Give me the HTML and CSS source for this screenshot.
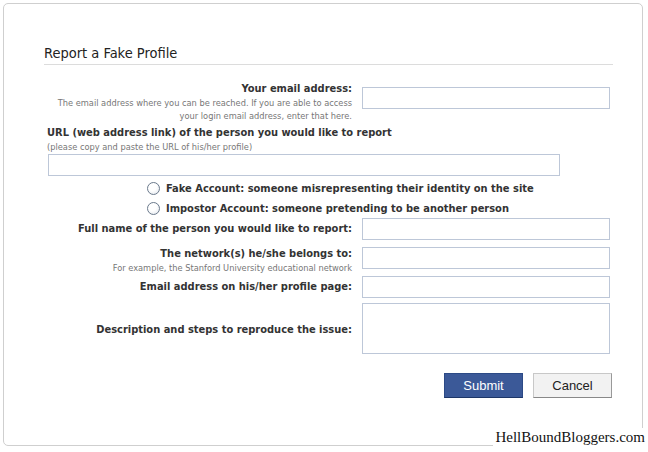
FILE: index.html
```html
<!DOCTYPE html>
<html>
<head>
<meta charset="utf-8">
<link rel="stylesheet" href="styles.css">
</head>
<body>
<div class="panel">
  <h2 class="title">Report a Fake Profile</h2>
  <div class="row row-email">
    <div class="label">
      <div class="lab">Your email address:</div>
      <div class="note">The email address where you can be reached. If you are able to access<br>your login email address, enter that here.</div>
    </div>
    <div class="field"><span class="input"></span></div>
  </div>
  <div class="url">
    <div class="lab">URL (web address link) of the person you would like to report</div>
    <div class="note">(please copy and paste the URL of his/her profile)</div>
    <span class="input wide"></span>
  </div>
  <div class="radios">
    <div class="radio"><span class="dot"></span>Fake Account: someone misrepresenting their identity on the site</div>
    <div class="radio"><span class="dot"></span>Impostor Account: someone pretending to be another person</div>
  </div>
  <div class="row row-name">
    <div class="label"><div class="lab">Full name of the person you would like to report:</div></div>
    <div class="field"><span class="input"></span></div>
  </div>
  <div class="row row-net">
    <div class="label">
      <div class="lab">The network(s) he/she belongs to:</div>
      <div class="note">For example, the Stanford University educational network</div>
    </div>
    <div class="field"><span class="input"></span></div>
  </div>
  <div class="row row-mail">
    <div class="label"><div class="lab">Email address on his/her profile page:</div></div>
    <div class="field"><span class="input"></span></div>
  </div>
  <div class="row row-desc">
    <div class="label"><div class="lab">Description and steps to reproduce the issue:</div></div>
    <div class="field"><span class="input area"></span></div>
  </div>
  <div class="buttons">
    <span class="btn submit">Submit</span>
    <span class="btn cancel">Cancel</span>
  </div>
</div>
<div class="watermark">HellBoundBloggers.com</div>
</body>
</html>
```
FILE: styles.css
```css
html, body {
  margin: 0;
  padding: 0;
  background: #fff;
}
body {
  width: 648px;
  height: 452px;
  position: relative;
  overflow: hidden;
  font-family: "DejaVu Sans", Tahoma, sans-serif;
  font-stretch: condensed;
  color: #333;
}
.panel {
  box-sizing: border-box;
  margin: 3px 0 0 3px;
  width: 640px;
  height: 443px;
  border: 1px solid #cfcfcf;
  border-radius: 5px;
  padding: 41px 29px 0 40px;
}
.title {
  margin: 0;
  font-size: 14.5px;
  font-weight: normal;
  line-height: 17px;
  color: #222;
  padding-bottom: 2px;
  border-bottom: 1px solid #dcdcdc;
}
.row {
  display: flex;
  align-items: flex-start;
}
.label {
  width: 308px;
  text-align: right;
  flex: none;
}
.field {
  margin-left: 10px;
}
.lab {
  font-size: 11px;
  font-weight: bold;
  line-height: 14px;
  color: #333;
}
.note {
  font-size: 9.2px;
  line-height: 13px;
  color: #777;
}
.input {
  display: block;
  box-sizing: border-box;
  width: 248px;
  height: 22px;
  border: 1px solid #bdc7d8;
  background: #fff;
}
.input.wide {
  width: 512px;
  margin-left: 1px;
  margin-top: 1px;
}
.input.area {
  height: 51px;
}
.row-email {
  margin-top: 19px;
}
.row-email .lab {
  margin-top: -2px;
}
.row-email .field {
  margin-top: 3px;
}
.url {
  margin-top: 4px;
  padding-left: 3px;
}
.radios {
  margin-top: 2px;
  padding-left: 103px;
}
.radio {
  display: flex;
  align-items: center;
  font-size: 11px;
  font-weight: bold;
  height: 20px;
  color: #333;
}
.dot {
  box-sizing: border-box;
  width: 13px;
  height: 13px;
  border-radius: 50%;
  border: 1px solid #6b7a8c;
  background: radial-gradient(circle at 40% 35%, #fff 0, #fff 40%, #dde3ea 100%);
  margin-right: 6px;
}
.row-name {
  margin-top: 0px;
}
.row-name .lab {
  margin-top: 4px;
}
.row-net {
  margin-top: 7px;
  height: 22px;
}
.row-mail {
  margin-top: 7px;
}
.row-mail .lab {
  margin-top: 4px;
}
.row-desc {
  margin-top: 5px;
}
.row-desc .lab {
  margin-top: 20px;
}
.buttons {
  display: flex;
  justify-content: flex-end;
  gap: 10px;
  margin-top: 19px;
  padding-right: 1px;
}
.btn {
  box-sizing: border-box;
  width: 79px;
  height: 25px;
  display: flex;
  align-items: center;
  justify-content: center;
  font-family: "Liberation Sans", Arial, sans-serif;
  font-size: 13px;
}
.submit {
  background: #3b5998;
  color: #fff;
  border: 1px solid #2c4a86;
  border-bottom-color: #1d3668;
}
.cancel {
  background: #f2f2f2;
  color: #222;
  border: 1px solid #c8c8c8;
  border-right-color: #999;
  border-bottom-color: #888;
}
.watermark {
  position: absolute;
  right: 3px;
  top: 428px;
  background: #fff;
  font-family: "Liberation Serif", "Times New Roman", serif;
  font-size: 15px;
  line-height: 18px;
  color: #111;
  padding-left: 2px;
}
```
